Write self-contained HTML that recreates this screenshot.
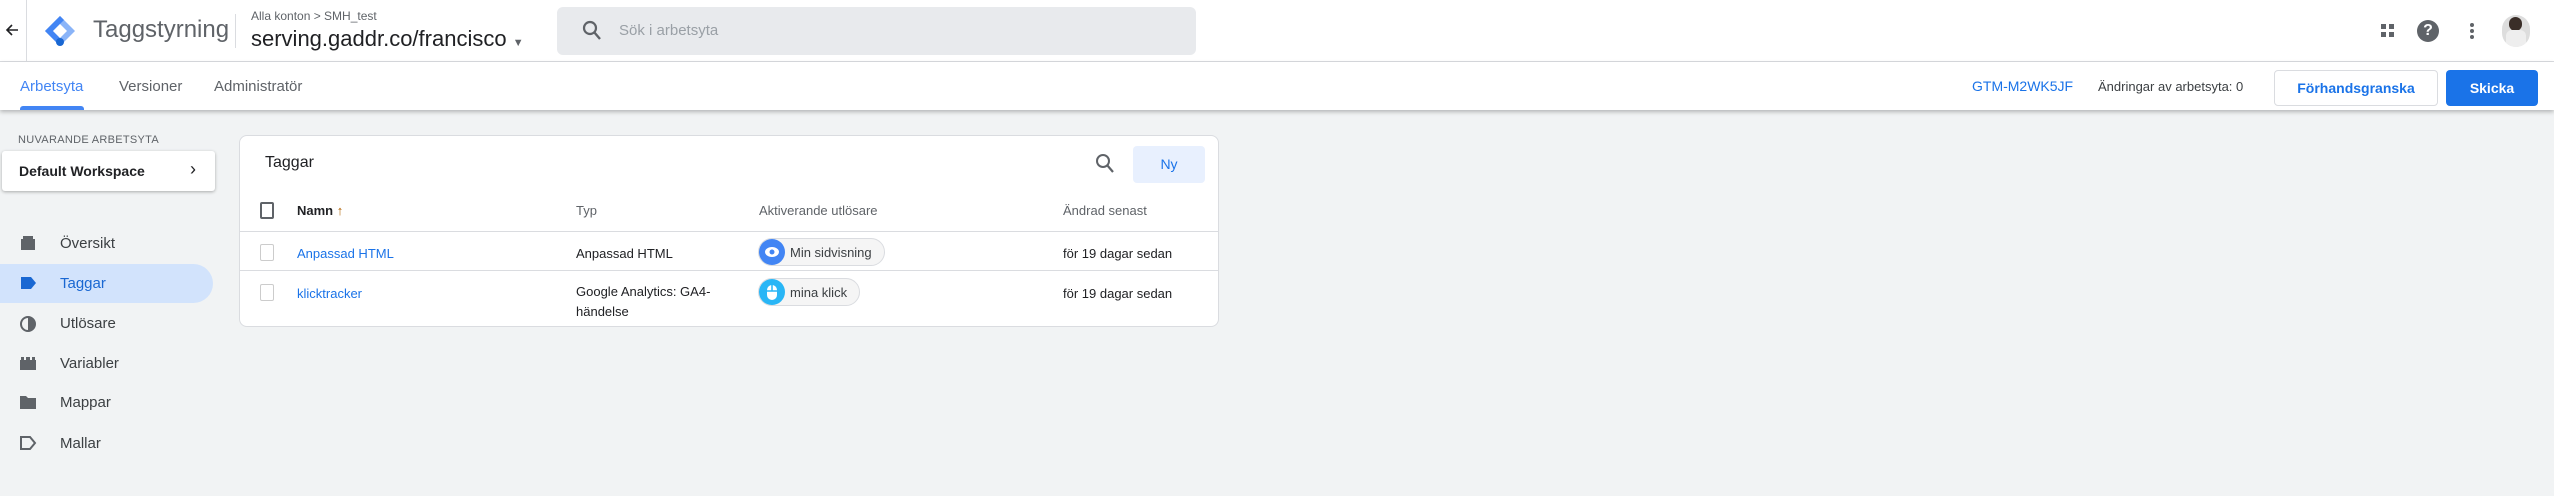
<!DOCTYPE html>
<html><head><meta charset="utf-8"><style>
*{box-sizing:border-box;margin:0;padding:0}
body{width:2554px;height:496px;overflow:hidden;background:#f1f3f4;font-family:"Liberation Sans",Arial,sans-serif;color:#202124;position:relative}
.a{position:absolute;white-space:nowrap}
#hdr{position:absolute;left:0;top:0;width:2554px;height:62px;background:#fff;border-bottom:1px solid #dadce0}
#tabs{position:absolute;left:0;top:62px;width:2554px;height:48px;background:#fff;box-shadow:0 2px 4px rgba(0,0,0,.25)}
.nav{position:absolute;left:0;width:213px;height:39px;font-size:15px;color:#3c4043}
.nav span{position:absolute;left:60px;top:11px}
.nav svg{position:absolute;left:19px;top:11px}
.card{position:absolute;left:239px;top:135px;width:980px;height:192px;background:#fff;border:1px solid #dadce0;border-radius:8px}
.cb{position:absolute;width:14px;height:17px;border:1.5px solid #ccc;border-radius:2px}
.t{font-size:13px;color:#3c4043}
.chip{position:absolute;height:28px;border:1px solid #dadce0;border-radius:14px;background:#f5f5f5;font-size:13px;color:#3c4043}
.chip i{position:absolute;left:0;top:0;width:26px;height:26px;border-radius:13px}
.chip span{position:absolute;left:31px;top:6px}
</style></head><body>
<div id="hdr">
 <svg class="a" style="left:4px;top:22px" width="16" height="16" viewBox="0 0 16 16"><path d="M14 8H3M8 3L3 8l5 5" stroke="#202124" stroke-width="1.6" fill="none"/></svg>
 <div class="a" style="left:26px;top:0;width:1px;height:62px;background:#dadce0"></div>
 <svg class="a" style="left:44px;top:15px" width="32" height="32" viewBox="0 0 32 32"><path d="M16 1L31 16 16 31 1 16Z" fill="#8ab4f8"/><path d="M16 1L1 16 16 31 20 27 9 16 20 5Z" fill="#4285f4"/><path d="M16 9L23 16 16 23 9 16Z" fill="#fff"/><circle cx="16" cy="27" r="4" fill="#1967d2"/></svg>
 <div class="a" style="left:93px;top:16px;font-size:24px;color:#5f6368">Taggstyrning</div>
 <div class="a" style="left:235px;top:14px;width:1px;height:34px;background:#dadce0"></div>
 <div class="a" style="left:251px;top:9px;font-size:12px;color:#5f6368">Alla konton &gt; SMH_test</div>
 <div class="a" style="left:251px;top:26px;font-size:22px;color:#202124">serving.gaddr.co/francisco <span style="font-size:11px;color:#5f6368">▼</span></div>
 <div class="a" style="left:557px;top:7px;width:639px;height:48px;background:#e8eaed;border-radius:6px"></div>
 <svg class="a" style="left:582px;top:20px" width="20" height="22" viewBox="0 0 20 22"><circle cx="8" cy="8" r="6" stroke="#5f6368" stroke-width="2.2" fill="none"/><path d="M12 12l6 7" stroke="#5f6368" stroke-width="2.4"/></svg>
 <div class="a" style="left:619px;top:22px;font-size:15px;color:#9aa0a6">Sök i arbetsyta</div>
 <svg class="a" style="left:2381px;top:24px" width="14" height="14"><rect x="0" y="0" width="5" height="5" fill="#5f6368"/><rect x="8" y="0" width="5" height="5" fill="#5f6368"/><rect x="0" y="8" width="5" height="5" fill="#5f6368"/><rect x="8" y="8" width="5" height="5" fill="#5f6368"/></svg>
 <div class="a" style="left:2417px;top:20px;width:22px;height:22px;border-radius:11px;background:#5f6368;color:#fff;font-weight:bold;font-size:16px;text-align:center;line-height:22px">?</div>
 <svg class="a" style="left:2469px;top:22px" width="6" height="18"><circle cx="3" cy="3" r="2" fill="#5f6368"/><circle cx="3" cy="9" r="2" fill="#5f6368"/><circle cx="3" cy="15" r="2" fill="#5f6368"/></svg>
 <div class="a" style="left:2502px;top:15px;width:28px;height:32px;border-radius:14px;background:#ddd;overflow:hidden"><div style="position:absolute;left:7px;top:2px;width:13px;height:14px;border-radius:7px;background:#3a2e28"></div><div style="position:absolute;left:4px;top:15px;width:20px;height:17px;background:#eee;border-radius:6px 6px 0 0"></div></div>
</div>
<div id="tabs">
 <div class="a" style="left:20px;top:16px;font-size:15px;color:#4285f4">Arbetsyta</div>
 <div class="a" style="left:20px;top:44px;width:64px;height:4px;background:#4285f4;border-radius:3px 3px 0 0"></div>
 <div class="a" style="left:119px;top:16px;font-size:15px;color:#5f6368">Versioner</div>
 <div class="a" style="left:214px;top:16px;font-size:15px;color:#5f6368">Administratör</div>
 <div class="a" style="left:1972px;top:16px;font-size:14px;color:#1a73e8">GTM-M2WK5JF</div>
 <div class="a" style="left:2098px;top:17px;font-size:13px;color:#3c4043">Ändringar av arbetsyta: 0</div>
 <div class="a" style="left:2274px;top:8px;width:164px;height:36px;border:1px solid #dadce0;border-radius:4px;font-size:14px;color:#1a73e8;font-weight:bold;text-align:center;line-height:34px">Förhandsgranska</div>
 <div class="a" style="left:2446px;top:8px;width:92px;height:36px;background:#1a73e8;border-radius:4px;font-size:14px;color:#fff;font-weight:bold;text-align:center;line-height:36px">Skicka</div>
</div>
<div class="a" style="left:18px;top:134px;font-size:11px;color:#5f6368;letter-spacing:.3px">NUVARANDE ARBETSYTA</div>
<div class="a" style="left:2px;top:151px;width:213px;height:40px;background:#fff;border-radius:3px;box-shadow:0 1px 3px rgba(0,0,0,.3)"><span class="a" style="left:17px;top:12px;font-size:14px;font-weight:bold;color:#202124">Default Workspace</span><span class="a" style="left:188px;top:8px;font-size:18px;color:#202124">›</span></div>
<div class="nav" style="top:224px"><svg width="18" height="16"><path d="M2 4h14v11H2z" fill="#5f6368"/><path d="M4 1h10v4H4z" fill="#5f6368"/></svg><span>Översikt</span></div>
<div class="nav" style="top:264px;background:#d2e3fc;border-radius:0 20px 20px 0"><svg width="18" height="16"><path d="M2 2h10l5 6-5 6H2z" fill="#1967d2"/></svg><span style="color:#1967d2">Taggar</span></div>
<div class="nav" style="top:304px"><svg width="18" height="18"><circle cx="9" cy="9" r="7" fill="none" stroke="#5f6368" stroke-width="2"/><path d="M9 2a7 7 0 0 1 0 14z" fill="#5f6368"/></svg><span>Utlösare</span></div>
<div class="nav" style="top:344px"><svg width="18" height="16"><path d="M1 5h16v10H1z" fill="#5f6368"/><path d="M2 2h3v3H2zM7 2h4v3H7zM13 2h3v3h-3z" fill="#5f6368"/></svg><span>Variabler</span></div>
<div class="nav" style="top:383px"><svg width="18" height="16"><path d="M1 2h6l2 2h8v11H1z" fill="#5f6368"/></svg><span>Mappar</span></div>
<div class="nav" style="top:424px"><svg width="18" height="16"><path d="M2 2h9l5 6-5 6H2z" fill="none" stroke="#5f6368" stroke-width="2"/></svg><span>Mallar</span></div>

<div class="card">
 <div class="a" style="left:25px;top:18px;font-size:16px;color:#202124">Taggar</div>
 <svg class="a" style="left:855px;top:17px" width="20" height="22" viewBox="0 0 20 22"><circle cx="8" cy="8" r="6" stroke="#5f6368" stroke-width="2" fill="none"/><path d="M12 12l6 7" stroke="#5f6368" stroke-width="2.2"/></svg>
 <div class="a" style="left:893px;top:10px;width:72px;height:37px;background:#e8f0fe;border-radius:4px;font-size:14px;color:#1a73e8;text-align:center;line-height:37px">Ny</div>
 <div class="cb" style="left:20px;top:66px;border-color:#5f6368;border-width:2px"></div>
 <div class="a t" style="left:57px;top:67px;font-weight:bold;color:#202124">Namn <span style="color:#b06000;font-weight:normal">↑</span></div>
 <div class="a t" style="left:336px;top:67px;color:#5f6368">Typ</div>
 <div class="a t" style="left:519px;top:67px;color:#5f6368">Aktiverande utlösare</div>
 <div class="a t" style="left:823px;top:67px;color:#5f6368">Ändrad senast</div>
 <div class="a" style="left:0;top:95px;width:978px;height:1px;background:#dadce0"></div>
 <div class="cb" style="left:20px;top:108px"></div>
 <div class="a t" style="left:57px;top:110px;color:#1a73e8">Anpassad HTML</div>
 <div class="a t" style="left:336px;top:110px;color:#202124">Anpassad HTML</div>
 <div class="chip" style="left:518px;top:102px;width:127px"><i style="background:#4285f4"><svg width="26" height="26"><ellipse cx="13" cy="13" rx="7" ry="5" fill="#fff"/><circle cx="13" cy="13" r="2.5" fill="#4285f4"/></svg></i><span>Min sidvisning</span></div>
 <div class="a t" style="left:823px;top:110px;color:#202124">för 19 dagar sedan</div>
 <div class="a" style="left:0;top:134px;width:978px;height:1px;background:#dadce0"></div>
 <div class="cb" style="left:20px;top:148px"></div>
 <div class="a t" style="left:57px;top:150px;color:#1a73e8">klicktracker</div>
 <div class="a t" style="left:336px;top:150px;color:#202124;line-height:20px;top:146px">Google Analytics: GA4-<br>händelse</div>
 <div class="chip" style="left:518px;top:142px;width:102px"><i style="background:#29b6f6"><svg width="26" height="26"><rect x="8" y="6" width="10" height="15" rx="5" fill="#fff"/><path d="M13 6v6M8 12h10" stroke="#29b6f6" stroke-width="1.5"/></svg></i><span>mina klick</span></div>
 <div class="a t" style="left:823px;top:150px;color:#202124">för 19 dagar sedan</div>
</div>
</body></html>
